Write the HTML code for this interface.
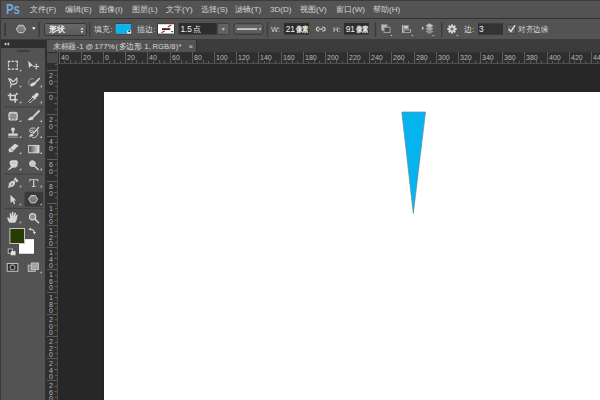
<!DOCTYPE html>
<html><head><meta charset="utf-8">
<style>
*{margin:0;padding:0;box-sizing:border-box}
html,body{width:600px;height:400px;overflow:hidden;background:#272727;font-family:"Liberation Sans",sans-serif;position:relative}
.a{position:absolute}
#menubar{left:0;top:0;width:600px;height:18px;background:#535353;border-top:1px solid #3c3c3c}
#menuline{left:0;top:18px;width:600px;height:1px;background:#333}
#opts{left:0;top:19px;width:600px;height:21px;background:#535353;border-bottom:1px solid #3c3c3c}
.mi{top:5px;font-size:8px;color:#d4d4d4;line-height:10px;white-space:nowrap}
#ps{left:5.5px;top:2px;font-size:14.5px;font-weight:bold;color:#72a9de;line-height:15px;transform:scaleX(0.78);transform-origin:0 0}
#tabbar{left:47px;top:40px;width:553px;height:12px;background:#3b3b3b}
#tab{left:47px;top:40px;width:150px;height:12px;background:#535353;border-right:1px solid #2e2e2e}
#leftcol{left:0;top:40px;width:47px;height:360px;background:#303030}
#lborder{left:0;top:0;width:1.3px;height:400px;background:#3a3a3a}
#panelhead{left:1px;top:40px;width:44.4px;height:8px;background:#2f2f2f}
#panel{left:1px;top:48px;width:44px;height:352px;background:#535353}
#hruler{left:47px;top:52px;width:553px;height:12px;background:#2e2e2e;border-bottom:1px solid #4e4e4e;border-top:1px solid #333}
#vruler{left:47px;top:52px;width:11px;height:348px;background:#2e2e2e;border-right:1px solid #4e4e4e}
#corner{left:47px;top:53px;width:10px;height:10px;background:#4a4a4a}
.ot{font-size:8px;color:#d8d8d8;line-height:10px;white-space:nowrap}
.num{font-size:8.4px;font-weight:normal;letter-spacing:-0.1px;color:#f0f0f0}
.cj{font-size:8px;font-weight:bold;color:#e8e8e8;line-height:10px;transform:scaleX(0.8);transform-origin:0 0}
.rt{font-size:7px;fill:#b8b8b8;font-family:"Liberation Sans",sans-serif}
.tt{font-size:7.5px;color:#d6d6d6;line-height:10px;white-space:nowrap}
#canvas{left:104px;top:92px;width:496px;height:308px;background:#fff;box-shadow:0 0 1px #111}
</style></head><body>
<div id="menubar" class="a"></div>
<div id="menuline" class="a"></div>
<div id="ps" class="a">Ps</div>
<div class="a mi" style="left:30px">文件(F)</div>
<div class="a mi" style="left:65px">编辑(E)</div>
<div class="a mi" style="left:99px">图像(I)</div>
<div class="a mi" style="left:132px">图层(L)</div>
<div class="a mi" style="left:166px">文字(Y)</div>
<div class="a mi" style="left:201px">选择(S)</div>
<div class="a mi" style="left:235px">滤镜(T)</div>
<div class="a mi" style="left:270px">3D(D)</div>
<div class="a mi" style="left:300px">视图(V)</div>
<div class="a mi" style="left:336px">窗口(W)</div>
<div class="a mi" style="left:373px">帮助(H)</div>
<div id="opts" class="a"></div>

<!-- options bar -->
<div class="a" style="left:3.8px;top:23px;width:2.4px;height:13px;background:#4e4e4e;border:0.7px solid #3e3e3e"></div>
<svg class="a" style="left:0;top:19px" width="600" height="21">
 <defs>
  <linearGradient id="hexg" x1="0" y1="0" x2="0" y2="1"><stop offset="0" stop-color="#909090"/><stop offset="1" stop-color="#6c6c6c"/></linearGradient>
  <linearGradient id="ddg" x1="0" y1="0" x2="0" y2="1"><stop offset="0" stop-color="#686868"/><stop offset="1" stop-color="#5a5a5a"/></linearGradient>
 </defs>
 <polygon points="16.3,10 18.8,6.3 23.2,6.3 25.7,10 23.2,13.7 18.8,13.7" fill="url(#hexg)" stroke="#d2d2d2" stroke-width="0.9"/>
 <polygon points="32,8.2 35.6,8.2 33.8,11" fill="#eee"/>
 <rect x="38.6" y="3" width="1.4" height="15" fill="#3c3c3c"/>
 <rect x="44.5" y="4.5" width="42" height="12" rx="2" fill="url(#ddg)" stroke="#363636" stroke-width="1"/>
 <polygon points="80.5,10.8 83.5,10.8 82,8.3" fill="#ddd"/>
 <polygon points="80.5,12 83.5,12 82,14.3" fill="#ddd"/>
 <rect x="89" y="3" width="1.4" height="15" fill="#3c3c3c"/>
 <rect x="114.8" y="4.4" width="17.2" height="11" fill="#3a3a3a"/><rect x="115.6" y="5.2" width="15.6" height="9.4" fill="#9ab8c4"/><rect x="116" y="5.5" width="15" height="8.8" fill="#02b5ef"/>
 <rect x="127.2" y="11.4" width="4" height="3.2" fill="#f0f0f0"/>
 <polygon points="127.8,11.8 130.8,11.8 129.3,13.4" fill="#111"/>
 <rect x="157" y="4.4" width="17.8" height="11" fill="#3a3a3a"/><rect x="158" y="5.2" width="16" height="9.4" fill="#fff"/>
 <rect x="162" y="9.2" width="8.2" height="1.8" fill="#2a2a2a"/>
 <line x1="167.8" y1="8" x2="171.2" y2="6" stroke="#e62020" stroke-width="1.3"/>
 <line x1="161.4" y1="13.8" x2="164.8" y2="11.8" stroke="#e62020" stroke-width="1.3"/>
 <polygon points="170.6,12.2 173.6,12.2 172.1,13.6" fill="#111"/>
 <rect x="178.7" y="4" width="38" height="11.5" fill="#2d2d2d"/>
 <rect x="217.5" y="4.5" width="11.5" height="11" rx="1.5" fill="#626262" stroke="#3a3a3a" stroke-width="0.8"/>
 <polygon points="221.5,9.5 225,9.5 223.25,11.3" fill="#e6e6e6"/>
 <rect x="234" y="4.8" width="29" height="10.4" rx="2" fill="url(#ddg)" stroke="#363636" stroke-width="1"/>
 <rect x="237" y="9.4" width="20" height="1.3" fill="#f2f2f2"/>
 <polygon points="258.5,9.5 261.5,9.5 260,11.2" fill="#e6e6e6"/>
 <rect x="266.8" y="3" width="1.4" height="15" fill="#3c3c3c"/>
 <rect x="284" y="4" width="25" height="11.5" fill="#2d2d2d"/>
 <g fill="none" stroke="#d8d8d8" stroke-width="1.1">
  <path d="M319.2,8.2 h-1.5 a2,2 0 0 0 0,3.8 h1.5"/>
  <path d="M322.3,8.2 h1.5 a2,2 0 0 1 0,3.8 h-1.5"/>
  <line x1="318.5" y1="10.1" x2="323" y2="10.1"/>
 </g>
 <rect x="344" y="4" width="25" height="11.5" fill="#2d2d2d"/>
 <rect x="374.8" y="3" width="1.4" height="15" fill="#3c3c3c"/>
 <rect x="381.3" y="5.6" width="5.8" height="5.8" fill="#b8b8b8" stroke="#8a8a8a" stroke-width="0.6"/>
 <rect x="384" y="8.2" width="6" height="5.2" fill="#4a4a4a" stroke="#a8a8a8" stroke-width="0.9"/>
 <polygon points="390.3,16 392.3,16 391.3,17.2" fill="#ddd"/>
 <rect x="402" y="6" width="1.3" height="8" fill="#bdbdbd"/>
 <rect x="403.8" y="6.6" width="4.5" height="3.2" fill="#c8c8c8" stroke="#9a9a9a" stroke-width="0.5"/>
 <rect x="404" y="11" width="6.5" height="2.2" fill="#2e2e2e" stroke="#cfcfcf" stroke-width="0.8"/>
 <polygon points="411.3,16 413.3,16 412.3,17.2" fill="#ddd"/>
 <g fill="#c9c9c9" stroke="#9a9a9a" stroke-width="0.4">
  <polygon points="429.5,4.5 433.3,6.8 429.5,9 425.7,6.8"/>
  <polygon points="429.5,7.5 433.3,9.7 429.5,12 425.7,9.7" fill="#a9a9a9"/>
  <polygon points="429.5,10.3 433.3,12.5 429.5,14.8 425.7,12.5" fill="#8f8f8f"/>
 </g>
 <polygon points="421.5,9.3 424,9.3 422.75,7.6" fill="#ddd"/>
 <rect x="422.3" y="9.3" width="0.9" height="1.5" fill="#ddd"/>
 <polygon points="432.3,16 434.3,16 433.3,17.2" fill="#ddd"/>
 <rect x="441" y="3" width="1.4" height="15" fill="#3c3c3c"/>
 <g transform="translate(452,10)">
  <circle r="3.6" fill="#d4d4d4"/>
  <g fill="#d4d4d4">
   <rect x="-0.9" y="-4.7" width="1.8" height="9.4"/>
   <rect x="-0.9" y="-4.7" width="1.8" height="9.4" transform="rotate(45)"/>
   <rect x="-0.9" y="-4.7" width="1.8" height="9.4" transform="rotate(90)"/>
   <rect x="-0.9" y="-4.7" width="1.8" height="9.4" transform="rotate(135)"/>
  </g>
  <circle r="1.5" fill="#6a6a6a"/>
 </g>
 <polygon points="456.3,16 458.3,16 457.3,17.2" fill="#ddd"/>
 <rect x="478" y="4.3" width="25" height="11.4" fill="#333"/>
 <rect x="507" y="5.8" width="8.3" height="8.8" rx="1" fill="#656565" stroke="#3c3c3c" stroke-width="0.8"/>
 <path d="M508.6,9.8 L510.9,12.6 L515.2,6.2" fill="none" stroke="#f2f2f2" stroke-width="1.2"/>
</svg>
<div class="a ot" style="left:49px;top:25px;font-size:8px;color:#f4f4f4;font-weight:bold">形状</div>
<div class="a ot" style="left:94px;top:25px">填充</div><div class="a ot" style="left:110.3px;top:25px">:</div>
<div class="a ot" style="left:137px;top:25px">描边</div><div class="a ot" style="left:153.3px;top:25px">:</div>
<div class="a ot num" style="left:180.6px;top:24.4px;font-weight:normal;color:#f2f2f2;font-size:8.3px">1.5</div><div class="a ot" style="left:192.6px;top:25px;color:#e8e8e8">点</div>
<div class="a ot" style="left:271px;top:25px;font-size:7.5px">W:</div>
<div class="a ot num" style="left:285.8px;top:24.2px">21</div><div class="a ot cj" style="left:296.3px;top:24.6px">像素</div>
<div class="a ot" style="left:333px;top:25px;font-size:7.5px">H:</div>
<div class="a ot num" style="left:345.8px;top:24.2px">91</div><div class="a ot cj" style="left:356.3px;top:24.6px">像素</div>
<div class="a ot" style="left:464px;top:25px">边:</div>
<div class="a ot num" style="left:479px;top:24.2px">3</div>
<div class="a ot" style="left:518.2px;top:25px;transform:scaleX(0.94);transform-origin:0 0">对齐边缘</div>
<div id="leftcol" class="a"></div>
<div id="panelhead" class="a"></div>
<div id="panel" class="a"></div>
<svg class="a" style="left:0;top:0" width="47" height="400">
 <defs>
  <linearGradient id="tg1" x1="0" y1="0" x2="0" y2="1"><stop offset="0" stop-color="#909090"/><stop offset="1" stop-color="#6a6a6a"/></linearGradient>
  <linearGradient id="grd" x1="0" y1="0" x2="1" y2="0"><stop offset="0" stop-color="#4a4a4a"/><stop offset="1" stop-color="#e0e0e0"/></linearGradient>
 </defs>
 <polygon points="4,44 6.3,42.3 6.3,45.7" fill="#cfcfcf"/>
 <polygon points="6.8,44 9.1,42.3 9.1,45.7" fill="#cfcfcf"/>
 <rect x="17" y="50" width="12.2" height="1.8" fill="#3c3c3c"/>
 <!-- separators -->
 <rect x="4" y="106.4" width="39" height="1.1" fill="#424242"/>
 <rect x="4" y="173.5" width="39" height="1.1" fill="#424242"/>
 <rect x="4" y="208" width="39" height="1.1" fill="#424242"/>
 <!-- selected shape tool bg -->
 <rect x="24.6" y="191.8" width="18.6" height="15" rx="1.5" fill="#3a3a3a"/>
 <g fill="none" stroke="#d4d4d4" stroke-linecap="round" stroke-linejoin="round">
  <!-- marquee -->
  <path d="M7.9,61.4 H17.9 M7.9,69.2 H17.9" stroke-width="1.2" stroke-dasharray="2.6 1.1" stroke-linecap="butt"/><path d="M8.5,60.9 V69.8 M17.3,60.9 V69.8" stroke-width="1.2" stroke-dasharray="2.5 0.95" stroke-linecap="butt"/>
  <!-- lasso -->
  <path d="M8.7,78.6 Q11.5,79 12.8,81.8 Q15.2,80.5 16.8,78 Q17.5,81.5 16.6,83 Q14.5,84.8 11.5,84.4 Q10.2,82 8.7,78.6 Z M11.2,84.4 L10.6,86.8" stroke-width="1.2"/>
  <!-- quick select dashed arc -->
  <path d="M33,78.8 Q29,78.5 28.6,82 Q28.6,85.6 31.5,86" stroke-width="0.9" stroke-dasharray="1.5 1" stroke="#a8a8a8"/>
  <path d="M39.3,78.6 L34.6,83.4" stroke-width="1.6"/>
  <!-- crop -->
  <path d="M7.8,95.5 H15.2 V102.8 M10.3,93 V99.8 H17.6 M15.2,95.5 L17.6,93" stroke-width="1.5" stroke-linecap="butt"/>
  <!-- eyedropper -->
  
  <!-- brush handle -->
  <path d="M39,111 L33,117.2" stroke-width="1.8"/>
  <!-- history spiral -->
  <path d="M34.8,128.2 Q30.4,127.2 29.5,130.4 Q29.4,132.8 32,132.5 Q33.7,132 33.1,130.6 Q32.4,129.6 31.2,130.4" stroke-width="0.9"/><path d="M37.8,130.4 Q38.9,134.6 36.1,136.8 Q34.7,137.9 32.8,137.7" stroke-width="0.9"/>
  <path d="M38.6,127.6 L33.4,133.2" stroke-width="1.4"/>
  <!-- dodge -->
  <circle cx="32.4" cy="163.6" r="2.9" fill="#c8c8c8" stroke-width="1"/>
  <path d="M34.6,165.9 L38.2,169.5" stroke-width="1.4"/>
  <!-- zoom -->
  <circle cx="32.6" cy="216.7" r="3.1" fill="#8c8c8c" stroke-width="1.2"/>
  <path d="M35,219.1 L38.6,222.7" stroke-width="1.6"/>
  <!-- swap arrows -->
  <path d="M30,229.2 Q33.8,229 34.4,232.6" stroke-width="1.1"/>
 </g>
 <g fill="#d6d6d6">
  <!-- move arrow -->
  <polygon points="28.2,60.8 33.4,65.9 30.8,66 29,68.2"/>
  <g transform="translate(36.3,66.5)">
   <rect x="-2.6" y="-0.45" width="5.2" height="0.9"/><rect x="-0.45" y="-2.6" width="0.9" height="5.2"/>
   <polygon points="-3,0 -1.8,-1.1 -1.8,1.1"/><polygon points="3,0 1.8,-1.1 1.8,1.1"/>
   <polygon points="0,-3 -1.1,-1.8 1.1,-1.8"/><polygon points="0,3 -1.1,1.8 1.1,1.8"/>
  </g>
  <!-- quick select head -->
  <ellipse cx="33" cy="84.3" rx="2.8" ry="1.7" transform="rotate(-25 33 84.3)"/>
  <!-- eyedropper head -->
  <g transform="rotate(-45 34.5 97)"><rect x="27.2" y="95.9" width="6" height="2.2" fill="#535353" stroke="#d4d4d4" stroke-width="0.8"/><rect x="32.8" y="94.7" width="1.8" height="4.6"/><rect x="34.3" y="95.3" width="5.2" height="3.4" rx="1.5"/></g>
  <!-- spot heal -->
  <rect x="8.3" y="111.8" width="9.6" height="8.8" rx="2.6" fill="#d0d0d0"/>
  <!-- brush head -->
  <path d="M27.7,119.9 Q28.6,117.6 31.4,116.4 L33.8,118.4 Q32.6,121 27.7,119.9 Z"/>
  <!-- stamp -->
  <circle cx="13" cy="129.3" r="1.9"/>
  <rect x="12.2" y="130.5" width="1.6" height="3"/>
  <rect x="8.2" y="133.4" width="9.6" height="2.4" rx="0.6"/>
  <rect x="8.2" y="136.6" width="9.6" height="1" fill="#a8a8a8"/>
  <!-- history brush head -->
  <path d="M28.9,136.5 Q29.5,134.5 31.8,133.5 L33.7,135 Q32.7,137.1 28.9,136.5 Z"/>
  <!-- eraser -->
  <polygon points="8.4,149.6 14.8,143.8 18.8,145.6 13,151.6 9.4,152.4"/>
  <!-- smudge -->
  <path d="M9.6,161.8 Q10,160.3 12.2,160.3 L16.4,160.3 Q18,160.5 17.9,162.4 L17.6,165 Q17.2,167.6 14,167.8 L12.8,167.5 L9,170.3 L8.2,169.5 L11,166.4 Q9.2,164.6 9.6,161.8 Z"/>
  <!-- pen -->
  <path d="M8,187.9 L9.2,183.2 Q10.8,180.8 14,180.6 L15.4,182 Q15.2,185.2 12.8,186.6 Z"/>
  <rect x="13.8" y="178.9" width="4.6" height="2.2" transform="rotate(45 16.1 180)"/>
  <!-- type T -->
  <path d="M29.4,179.2 H38.2 V181.6 H37.6 Q37.3,180.1 36.4,180.1 H34.3 V186.2 H35.6 V187 H31.8 V186.2 H33.1 V180.1 H31.2 Q30.3,180.1 30,181.6 H29.4 Z"/>
  <!-- path selection arrow -->
  <polygon points="10.4,194.8 16.2,200.4 13.8,200.6 15.2,203.6 14,204.2 12.6,201.2 10.6,203"/>
  <!-- hand -->
  <path d="M9.4,222.8 Q7.2,220 7.2,217.8 Q7.8,217 8.6,217.6 L10,219 L9.6,213.6 Q10.2,212.8 11,213.6 L11.4,216.6 L11.8,212.2 Q12.6,211.4 13.4,212.2 L13.4,216.4 L14.6,212.8 Q15.4,212.2 16,213 L15.4,216.8 L16.8,214.6 Q17.6,214.4 17.8,215.2 L16.6,220 Q15.8,222.6 14.6,222.8 Z"/>
  <!-- swap arrow heads -->
  <polygon points="28.6,229.2 31,227.6 31,230.8"/>
  <polygon points="34.4,234.4 32.8,232 36,232"/>
 </g>
 <!-- spot heal details -->
 <rect x="10" y="113.4" width="6.2" height="5.6" rx="1.6" fill="#8e8e8e"/>
 <g stroke="#535353" stroke-width="0.8">
  <line x1="8.5" y1="113.6" x2="9.5" y2="114.2"/><line x1="8.5" y1="117.6" x2="9.5" y2="117"/>
  <line x1="11" y1="111" x2="11.4" y2="112.2"/><line x1="15" y1="111" x2="14.6" y2="112.2"/>
  <line x1="11" y1="120.2" x2="11.4" y2="119"/><line x1="15" y1="120.2" x2="14.6" y2="119"/>
  <line x1="17.5" y1="113.6" x2="16.5" y2="114.2"/><line x1="17.5" y1="117.6" x2="16.5" y2="117"/>
 </g>
 <!-- eyedropper stripes -->
 
 <!-- gradient -->
 <rect x="28.6" y="145.4" width="10.4" height="7.4" fill="url(#grd)" stroke="#dcdcdc" stroke-width="0.9"/>
 <!-- eraser line -->
 <path d="M9.6,148.6 L13.6,150.6 L18.4,146" stroke="#7a7a7a" stroke-width="0.8" fill="none"/>
 <!-- smudge detail -->
 <path d="M11.8,163.2 Q13.6,162.4 15.6,163.4" stroke="#9a9a9a" stroke-width="0.7" fill="none"/>
 <!-- pen hole -->
 <circle cx="12" cy="184" r="0.8" fill="#535353"/><path d="M8.6,187.4 L11.6,184.4" stroke="#7a7a7a" stroke-width="0.5"/>
 <!-- shape hexagon -->
 <polygon points="28.6,199.2 30.9,195.5 35.3,195.5 37.6,199.2 35.3,202.9 30.9,202.9" fill="url(#tg1)" stroke="#d6d6d6" stroke-width="0.9"/>
 <!-- corner triangles -->
 <g fill="#bdbdbd">
  <polygon points="21.3,69 21.3,71.3 19,71.3"/>
  <polygon points="21.3,85 21.3,87.3 19,87.3"/>
  <polygon points="42,85 42,87.3 39.7,87.3"/>
  <polygon points="21.3,101 21.3,103.3 19,103.3"/>
  <polygon points="42,101 42,103.3 39.7,103.3"/>
  <polygon points="21.3,119.7 21.3,122 19,122"/>
  <polygon points="42,119.7 42,122 39.7,122"/>
  <polygon points="21.3,135.8 21.3,138 19,138"/>
  <polygon points="42,135.8 42,138 39.7,138"/>
  <polygon points="21.3,151.8 21.3,154 19,154"/>
  <polygon points="42,151.8 42,154 39.7,154"/>
  <polygon points="21.3,168 21.3,170.3 19,170.3"/>
  <polygon points="42,168 42,170.3 39.7,170.3"/>
  <polygon points="21.3,185 21.3,187.3 19,187.3"/>
  <polygon points="42,185 42,187.3 39.7,187.3"/>
  <polygon points="21.2,203 21.2,205.2 19,205.2"/>
  <polygon points="42.1,203 42.1,205.2 39.9,205.2"/>
  <polygon points="21.2,221 21.2,223.2 19,223.2"/>
  <polygon points="42,271 42,273.2 39.8,273.2"/>
 </g>
 <!-- colors -->
 <rect x="18.6" y="238.7" width="15.9" height="15.5" fill="#ffffff" stroke="#3a3a3a" stroke-width="0.8"/>
 <rect x="9.9" y="228.5" width="14.6" height="15" fill="#253c04" stroke="#c4c4c4" stroke-width="1"/>
 <rect x="8.2" y="249" width="4.4" height="4.2" fill="#2b2b2b" stroke="#d0d0d0" stroke-width="0.8"/>
 <rect x="11" y="251.2" width="4.2" height="3.8" fill="#e6e6e6" stroke="#d0d0d0" stroke-width="0.6"/>
 <!-- quick mask -->
 <rect x="7.2" y="263.5" width="10.6" height="7.8" fill="#2e2e2e" stroke="#bcbcbc" stroke-width="1.1"/>
 <circle cx="12.5" cy="267.4" r="2.4" fill="#262626" stroke="#8e8e8e" stroke-width="1.3"/>
 <!-- screen mode -->
 <rect x="28.2" y="265.2" width="7" height="6.2" fill="#7a7a7a" stroke="#c4c4c4" stroke-width="0.9"/>
 <rect x="31.3" y="263" width="7.2" height="6.6" fill="#9a9a9a" stroke="#c8c8c8" stroke-width="0.9"/>
 <path d="M32.2,265.2 H37.6 M32.2,267 H37.6" stroke="#c0c0c0" stroke-width="0.6"/>
</svg>

<div id="tabbar" class="a"></div>
<div id="lborder" class="a"></div>
<div id="tab" class="a"></div>
<div id="hruler" class="a"></div>
<div id="vruler" class="a"></div>
<svg class="a" style="left:0;top:52px" width="600" height="12">
<line x1="59.5" y1="0" x2="59.5" y2="11" stroke="#5c5c5c" stroke-width="1"/>
<text x="61" y="7.9" class="rt">40</text>
<line x1="64.5" y1="9" x2="64.5" y2="11" stroke="#5c5c5c" stroke-width="1"/>
<line x1="70.5" y1="8" x2="70.5" y2="11" stroke="#5c5c5c" stroke-width="1"/>
<line x1="75.5" y1="9" x2="75.5" y2="11" stroke="#5c5c5c" stroke-width="1"/>
<line x1="81.5" y1="0" x2="81.5" y2="11" stroke="#5c5c5c" stroke-width="1"/>
<text x="83" y="7.9" class="rt">20</text>
<line x1="86.5" y1="9" x2="86.5" y2="11" stroke="#5c5c5c" stroke-width="1"/>
<line x1="92.5" y1="8" x2="92.5" y2="11" stroke="#5c5c5c" stroke-width="1"/>
<line x1="98.5" y1="9" x2="98.5" y2="11" stroke="#5c5c5c" stroke-width="1"/>
<line x1="103.5" y1="0" x2="103.5" y2="11" stroke="#5c5c5c" stroke-width="1"/>
<text x="105" y="7.9" class="rt">0</text>
<line x1="109.5" y1="9" x2="109.5" y2="11" stroke="#5c5c5c" stroke-width="1"/>
<line x1="114.5" y1="8" x2="114.5" y2="11" stroke="#5c5c5c" stroke-width="1"/>
<line x1="120.5" y1="9" x2="120.5" y2="11" stroke="#5c5c5c" stroke-width="1"/>
<line x1="125.5" y1="0" x2="125.5" y2="11" stroke="#5c5c5c" stroke-width="1"/>
<text x="127" y="7.9" class="rt">20</text>
<line x1="131.5" y1="9" x2="131.5" y2="11" stroke="#5c5c5c" stroke-width="1"/>
<line x1="136.5" y1="8" x2="136.5" y2="11" stroke="#5c5c5c" stroke-width="1"/>
<line x1="142.5" y1="9" x2="142.5" y2="11" stroke="#5c5c5c" stroke-width="1"/>
<line x1="147.5" y1="0" x2="147.5" y2="11" stroke="#5c5c5c" stroke-width="1"/>
<text x="149" y="7.9" class="rt">40</text>
<line x1="153.5" y1="9" x2="153.5" y2="11" stroke="#5c5c5c" stroke-width="1"/>
<line x1="159.5" y1="8" x2="159.5" y2="11" stroke="#5c5c5c" stroke-width="1"/>
<line x1="164.5" y1="9" x2="164.5" y2="11" stroke="#5c5c5c" stroke-width="1"/>
<line x1="170.5" y1="0" x2="170.5" y2="11" stroke="#5c5c5c" stroke-width="1"/>
<text x="172" y="7.9" class="rt">60</text>
<line x1="175.5" y1="9" x2="175.5" y2="11" stroke="#5c5c5c" stroke-width="1"/>
<line x1="181.5" y1="8" x2="181.5" y2="11" stroke="#5c5c5c" stroke-width="1"/>
<line x1="186.5" y1="9" x2="186.5" y2="11" stroke="#5c5c5c" stroke-width="1"/>
<line x1="192.5" y1="0" x2="192.5" y2="11" stroke="#5c5c5c" stroke-width="1"/>
<text x="194" y="7.9" class="rt">80</text>
<line x1="197.5" y1="9" x2="197.5" y2="11" stroke="#5c5c5c" stroke-width="1"/>
<line x1="203.5" y1="8" x2="203.5" y2="11" stroke="#5c5c5c" stroke-width="1"/>
<line x1="208.5" y1="9" x2="208.5" y2="11" stroke="#5c5c5c" stroke-width="1"/>
<line x1="214.5" y1="0" x2="214.5" y2="11" stroke="#5c5c5c" stroke-width="1"/>
<text x="216" y="7.9" class="rt">100</text>
<line x1="220.5" y1="9" x2="220.5" y2="11" stroke="#5c5c5c" stroke-width="1"/>
<line x1="225.5" y1="8" x2="225.5" y2="11" stroke="#5c5c5c" stroke-width="1"/>
<line x1="231.5" y1="9" x2="231.5" y2="11" stroke="#5c5c5c" stroke-width="1"/>
<line x1="236.5" y1="0" x2="236.5" y2="11" stroke="#5c5c5c" stroke-width="1"/>
<text x="238" y="7.9" class="rt">120</text>
<line x1="242.5" y1="9" x2="242.5" y2="11" stroke="#5c5c5c" stroke-width="1"/>
<line x1="247.5" y1="8" x2="247.5" y2="11" stroke="#5c5c5c" stroke-width="1"/>
<line x1="253.5" y1="9" x2="253.5" y2="11" stroke="#5c5c5c" stroke-width="1"/>
<line x1="258.5" y1="0" x2="258.5" y2="11" stroke="#5c5c5c" stroke-width="1"/>
<text x="260" y="7.9" class="rt">140</text>
<line x1="264.5" y1="9" x2="264.5" y2="11" stroke="#5c5c5c" stroke-width="1"/>
<line x1="269.5" y1="8" x2="269.5" y2="11" stroke="#5c5c5c" stroke-width="1"/>
<line x1="275.5" y1="9" x2="275.5" y2="11" stroke="#5c5c5c" stroke-width="1"/>
<line x1="281.5" y1="0" x2="281.5" y2="11" stroke="#5c5c5c" stroke-width="1"/>
<text x="283" y="7.9" class="rt">160</text>
<line x1="286.5" y1="9" x2="286.5" y2="11" stroke="#5c5c5c" stroke-width="1"/>
<line x1="292.5" y1="8" x2="292.5" y2="11" stroke="#5c5c5c" stroke-width="1"/>
<line x1="297.5" y1="9" x2="297.5" y2="11" stroke="#5c5c5c" stroke-width="1"/>
<line x1="303.5" y1="0" x2="303.5" y2="11" stroke="#5c5c5c" stroke-width="1"/>
<text x="305" y="7.9" class="rt">180</text>
<line x1="308.5" y1="9" x2="308.5" y2="11" stroke="#5c5c5c" stroke-width="1"/>
<line x1="314.5" y1="8" x2="314.5" y2="11" stroke="#5c5c5c" stroke-width="1"/>
<line x1="319.5" y1="9" x2="319.5" y2="11" stroke="#5c5c5c" stroke-width="1"/>
<line x1="325.5" y1="0" x2="325.5" y2="11" stroke="#5c5c5c" stroke-width="1"/>
<text x="327" y="7.9" class="rt">200</text>
<line x1="330.5" y1="9" x2="330.5" y2="11" stroke="#5c5c5c" stroke-width="1"/>
<line x1="336.5" y1="8" x2="336.5" y2="11" stroke="#5c5c5c" stroke-width="1"/>
<line x1="342.5" y1="9" x2="342.5" y2="11" stroke="#5c5c5c" stroke-width="1"/>
<line x1="347.5" y1="0" x2="347.5" y2="11" stroke="#5c5c5c" stroke-width="1"/>
<text x="349" y="7.9" class="rt">220</text>
<line x1="353.5" y1="9" x2="353.5" y2="11" stroke="#5c5c5c" stroke-width="1"/>
<line x1="358.5" y1="8" x2="358.5" y2="11" stroke="#5c5c5c" stroke-width="1"/>
<line x1="364.5" y1="9" x2="364.5" y2="11" stroke="#5c5c5c" stroke-width="1"/>
<line x1="369.5" y1="0" x2="369.5" y2="11" stroke="#5c5c5c" stroke-width="1"/>
<text x="371" y="7.9" class="rt">240</text>
<line x1="375.5" y1="9" x2="375.5" y2="11" stroke="#5c5c5c" stroke-width="1"/>
<line x1="380.5" y1="8" x2="380.5" y2="11" stroke="#5c5c5c" stroke-width="1"/>
<line x1="386.5" y1="9" x2="386.5" y2="11" stroke="#5c5c5c" stroke-width="1"/>
<line x1="391.5" y1="0" x2="391.5" y2="11" stroke="#5c5c5c" stroke-width="1"/>
<text x="393" y="7.9" class="rt">260</text>
<line x1="397.5" y1="9" x2="397.5" y2="11" stroke="#5c5c5c" stroke-width="1"/>
<line x1="403.5" y1="8" x2="403.5" y2="11" stroke="#5c5c5c" stroke-width="1"/>
<line x1="408.5" y1="9" x2="408.5" y2="11" stroke="#5c5c5c" stroke-width="1"/>
<line x1="414.5" y1="0" x2="414.5" y2="11" stroke="#5c5c5c" stroke-width="1"/>
<text x="416" y="7.9" class="rt">280</text>
<line x1="419.5" y1="9" x2="419.5" y2="11" stroke="#5c5c5c" stroke-width="1"/>
<line x1="425.5" y1="8" x2="425.5" y2="11" stroke="#5c5c5c" stroke-width="1"/>
<line x1="430.5" y1="9" x2="430.5" y2="11" stroke="#5c5c5c" stroke-width="1"/>
<line x1="436.5" y1="0" x2="436.5" y2="11" stroke="#5c5c5c" stroke-width="1"/>
<text x="438" y="7.9" class="rt">300</text>
<line x1="441.5" y1="9" x2="441.5" y2="11" stroke="#5c5c5c" stroke-width="1"/>
<line x1="447.5" y1="8" x2="447.5" y2="11" stroke="#5c5c5c" stroke-width="1"/>
<line x1="452.5" y1="9" x2="452.5" y2="11" stroke="#5c5c5c" stroke-width="1"/>
<line x1="458.5" y1="0" x2="458.5" y2="11" stroke="#5c5c5c" stroke-width="1"/>
<text x="460" y="7.9" class="rt">320</text>
<line x1="463.5" y1="9" x2="463.5" y2="11" stroke="#5c5c5c" stroke-width="1"/>
<line x1="469.5" y1="8" x2="469.5" y2="11" stroke="#5c5c5c" stroke-width="1"/>
<line x1="475.5" y1="9" x2="475.5" y2="11" stroke="#5c5c5c" stroke-width="1"/>
<line x1="480.5" y1="0" x2="480.5" y2="11" stroke="#5c5c5c" stroke-width="1"/>
<text x="482" y="7.9" class="rt">340</text>
<line x1="486.5" y1="9" x2="486.5" y2="11" stroke="#5c5c5c" stroke-width="1"/>
<line x1="491.5" y1="8" x2="491.5" y2="11" stroke="#5c5c5c" stroke-width="1"/>
<line x1="497.5" y1="9" x2="497.5" y2="11" stroke="#5c5c5c" stroke-width="1"/>
<line x1="502.5" y1="0" x2="502.5" y2="11" stroke="#5c5c5c" stroke-width="1"/>
<text x="504" y="7.9" class="rt">360</text>
<line x1="508.5" y1="9" x2="508.5" y2="11" stroke="#5c5c5c" stroke-width="1"/>
<line x1="513.5" y1="8" x2="513.5" y2="11" stroke="#5c5c5c" stroke-width="1"/>
<line x1="519.5" y1="9" x2="519.5" y2="11" stroke="#5c5c5c" stroke-width="1"/>
<line x1="524.5" y1="0" x2="524.5" y2="11" stroke="#5c5c5c" stroke-width="1"/>
<text x="526" y="7.9" class="rt">380</text>
<line x1="530.5" y1="9" x2="530.5" y2="11" stroke="#5c5c5c" stroke-width="1"/>
<line x1="536.5" y1="8" x2="536.5" y2="11" stroke="#5c5c5c" stroke-width="1"/>
<line x1="541.5" y1="9" x2="541.5" y2="11" stroke="#5c5c5c" stroke-width="1"/>
<line x1="547.5" y1="0" x2="547.5" y2="11" stroke="#5c5c5c" stroke-width="1"/>
<text x="549" y="7.9" class="rt">400</text>
<line x1="552.5" y1="9" x2="552.5" y2="11" stroke="#5c5c5c" stroke-width="1"/>
<line x1="558.5" y1="8" x2="558.5" y2="11" stroke="#5c5c5c" stroke-width="1"/>
<line x1="563.5" y1="9" x2="563.5" y2="11" stroke="#5c5c5c" stroke-width="1"/>
<line x1="569.5" y1="0" x2="569.5" y2="11" stroke="#5c5c5c" stroke-width="1"/>
<text x="571" y="7.9" class="rt">420</text>
<line x1="574.5" y1="9" x2="574.5" y2="11" stroke="#5c5c5c" stroke-width="1"/>
<line x1="580.5" y1="8" x2="580.5" y2="11" stroke="#5c5c5c" stroke-width="1"/>
<line x1="585.5" y1="9" x2="585.5" y2="11" stroke="#5c5c5c" stroke-width="1"/>
<line x1="591.5" y1="0" x2="591.5" y2="11" stroke="#5c5c5c" stroke-width="1"/>
<text x="593" y="7.9" class="rt">440</text>
<line x1="597.5" y1="9" x2="597.5" y2="11" stroke="#5c5c5c" stroke-width="1"/>
</svg>
<svg class="a" style="left:47px;top:0" width="11" height="400">
<line x1="8" y1="64.5" x2="10" y2="64.5" stroke="#5c5c5c" stroke-width="1"/>
<line x1="0" y1="70.5" x2="10" y2="70.5" stroke="#5c5c5c" stroke-width="1"/>
<text x="2" y="78.0" class="rt">2</text>
<text x="2" y="84.6" class="rt">0</text>
<line x1="8" y1="75.5" x2="10" y2="75.5" stroke="#5c5c5c" stroke-width="1"/>
<line x1="7" y1="81.5" x2="10" y2="81.5" stroke="#5c5c5c" stroke-width="1"/>
<line x1="8" y1="86.5" x2="10" y2="86.5" stroke="#5c5c5c" stroke-width="1"/>
<line x1="0" y1="92.5" x2="10" y2="92.5" stroke="#5c5c5c" stroke-width="1"/>
<text x="2" y="100.0" class="rt">0</text>
<line x1="8" y1="98.5" x2="10" y2="98.5" stroke="#5c5c5c" stroke-width="1"/>
<line x1="7" y1="103.5" x2="10" y2="103.5" stroke="#5c5c5c" stroke-width="1"/>
<line x1="8" y1="109.5" x2="10" y2="109.5" stroke="#5c5c5c" stroke-width="1"/>
<line x1="0" y1="114.5" x2="10" y2="114.5" stroke="#5c5c5c" stroke-width="1"/>
<text x="2" y="122.0" class="rt">2</text>
<text x="2" y="128.6" class="rt">0</text>
<line x1="8" y1="120.5" x2="10" y2="120.5" stroke="#5c5c5c" stroke-width="1"/>
<line x1="7" y1="125.5" x2="10" y2="125.5" stroke="#5c5c5c" stroke-width="1"/>
<line x1="8" y1="131.5" x2="10" y2="131.5" stroke="#5c5c5c" stroke-width="1"/>
<line x1="0" y1="136.5" x2="10" y2="136.5" stroke="#5c5c5c" stroke-width="1"/>
<text x="2" y="144.0" class="rt">4</text>
<text x="2" y="150.6" class="rt">0</text>
<line x1="8" y1="142.5" x2="10" y2="142.5" stroke="#5c5c5c" stroke-width="1"/>
<line x1="7" y1="147.5" x2="10" y2="147.5" stroke="#5c5c5c" stroke-width="1"/>
<line x1="8" y1="153.5" x2="10" y2="153.5" stroke="#5c5c5c" stroke-width="1"/>
<line x1="0" y1="159.5" x2="10" y2="159.5" stroke="#5c5c5c" stroke-width="1"/>
<text x="2" y="167.0" class="rt">6</text>
<text x="2" y="173.6" class="rt">0</text>
<line x1="8" y1="164.5" x2="10" y2="164.5" stroke="#5c5c5c" stroke-width="1"/>
<line x1="7" y1="170.5" x2="10" y2="170.5" stroke="#5c5c5c" stroke-width="1"/>
<line x1="8" y1="175.5" x2="10" y2="175.5" stroke="#5c5c5c" stroke-width="1"/>
<line x1="0" y1="181.5" x2="10" y2="181.5" stroke="#5c5c5c" stroke-width="1"/>
<text x="2" y="189.0" class="rt">8</text>
<text x="2" y="195.6" class="rt">0</text>
<line x1="8" y1="186.5" x2="10" y2="186.5" stroke="#5c5c5c" stroke-width="1"/>
<line x1="7" y1="192.5" x2="10" y2="192.5" stroke="#5c5c5c" stroke-width="1"/>
<line x1="8" y1="197.5" x2="10" y2="197.5" stroke="#5c5c5c" stroke-width="1"/>
<line x1="0" y1="203.5" x2="10" y2="203.5" stroke="#5c5c5c" stroke-width="1"/>
<text x="2" y="211.0" class="rt">1</text>
<text x="2" y="217.6" class="rt">0</text>
<text x="2" y="224.2" class="rt">0</text>
<line x1="8" y1="208.5" x2="10" y2="208.5" stroke="#5c5c5c" stroke-width="1"/>
<line x1="7" y1="214.5" x2="10" y2="214.5" stroke="#5c5c5c" stroke-width="1"/>
<line x1="8" y1="220.5" x2="10" y2="220.5" stroke="#5c5c5c" stroke-width="1"/>
<line x1="0" y1="225.5" x2="10" y2="225.5" stroke="#5c5c5c" stroke-width="1"/>
<text x="2" y="233.0" class="rt">1</text>
<text x="2" y="239.6" class="rt">2</text>
<text x="2" y="246.2" class="rt">0</text>
<line x1="8" y1="231.5" x2="10" y2="231.5" stroke="#5c5c5c" stroke-width="1"/>
<line x1="7" y1="236.5" x2="10" y2="236.5" stroke="#5c5c5c" stroke-width="1"/>
<line x1="8" y1="242.5" x2="10" y2="242.5" stroke="#5c5c5c" stroke-width="1"/>
<line x1="0" y1="247.5" x2="10" y2="247.5" stroke="#5c5c5c" stroke-width="1"/>
<text x="2" y="255.0" class="rt">1</text>
<text x="2" y="261.6" class="rt">4</text>
<text x="2" y="268.2" class="rt">0</text>
<line x1="8" y1="253.5" x2="10" y2="253.5" stroke="#5c5c5c" stroke-width="1"/>
<line x1="7" y1="258.5" x2="10" y2="258.5" stroke="#5c5c5c" stroke-width="1"/>
<line x1="8" y1="264.5" x2="10" y2="264.5" stroke="#5c5c5c" stroke-width="1"/>
<line x1="0" y1="269.5" x2="10" y2="269.5" stroke="#5c5c5c" stroke-width="1"/>
<text x="2" y="277.0" class="rt">1</text>
<text x="2" y="283.6" class="rt">6</text>
<text x="2" y="290.2" class="rt">0</text>
<line x1="8" y1="275.5" x2="10" y2="275.5" stroke="#5c5c5c" stroke-width="1"/>
<line x1="7" y1="281.5" x2="10" y2="281.5" stroke="#5c5c5c" stroke-width="1"/>
<line x1="8" y1="286.5" x2="10" y2="286.5" stroke="#5c5c5c" stroke-width="1"/>
<line x1="0" y1="292.5" x2="10" y2="292.5" stroke="#5c5c5c" stroke-width="1"/>
<text x="2" y="300.0" class="rt">1</text>
<text x="2" y="306.6" class="rt">8</text>
<text x="2" y="313.2" class="rt">0</text>
<line x1="8" y1="297.5" x2="10" y2="297.5" stroke="#5c5c5c" stroke-width="1"/>
<line x1="7" y1="303.5" x2="10" y2="303.5" stroke="#5c5c5c" stroke-width="1"/>
<line x1="8" y1="308.5" x2="10" y2="308.5" stroke="#5c5c5c" stroke-width="1"/>
<line x1="0" y1="314.5" x2="10" y2="314.5" stroke="#5c5c5c" stroke-width="1"/>
<text x="2" y="322.0" class="rt">2</text>
<text x="2" y="328.6" class="rt">0</text>
<text x="2" y="335.2" class="rt">0</text>
<line x1="8" y1="319.5" x2="10" y2="319.5" stroke="#5c5c5c" stroke-width="1"/>
<line x1="7" y1="325.5" x2="10" y2="325.5" stroke="#5c5c5c" stroke-width="1"/>
<line x1="8" y1="330.5" x2="10" y2="330.5" stroke="#5c5c5c" stroke-width="1"/>
<line x1="0" y1="336.5" x2="10" y2="336.5" stroke="#5c5c5c" stroke-width="1"/>
<text x="2" y="344.0" class="rt">2</text>
<text x="2" y="350.6" class="rt">2</text>
<text x="2" y="357.2" class="rt">0</text>
<line x1="8" y1="342.5" x2="10" y2="342.5" stroke="#5c5c5c" stroke-width="1"/>
<line x1="7" y1="347.5" x2="10" y2="347.5" stroke="#5c5c5c" stroke-width="1"/>
<line x1="8" y1="353.5" x2="10" y2="353.5" stroke="#5c5c5c" stroke-width="1"/>
<line x1="0" y1="358.5" x2="10" y2="358.5" stroke="#5c5c5c" stroke-width="1"/>
<text x="2" y="366.0" class="rt">2</text>
<text x="2" y="372.6" class="rt">4</text>
<text x="2" y="379.2" class="rt">0</text>
<line x1="8" y1="364.5" x2="10" y2="364.5" stroke="#5c5c5c" stroke-width="1"/>
<line x1="7" y1="369.5" x2="10" y2="369.5" stroke="#5c5c5c" stroke-width="1"/>
<line x1="8" y1="375.5" x2="10" y2="375.5" stroke="#5c5c5c" stroke-width="1"/>
<line x1="0" y1="380.5" x2="10" y2="380.5" stroke="#5c5c5c" stroke-width="1"/>
<text x="2" y="388.0" class="rt">2</text>
<text x="2" y="394.6" class="rt">6</text>
<text x="2" y="401.2" class="rt">0</text>
<line x1="8" y1="386.5" x2="10" y2="386.5" stroke="#5c5c5c" stroke-width="1"/>
<line x1="7" y1="391.5" x2="10" y2="391.5" stroke="#5c5c5c" stroke-width="1"/>
<line x1="8" y1="397.5" x2="10" y2="397.5" stroke="#5c5c5c" stroke-width="1"/>
</svg>
<div id="corner" class="a"></div>
<div class="a tt" style="left:53.0px;top:42px;letter-spacing:-0.3px">未标题</div><div class="a tt" style="left:76.6px;top:42px">-</div><div class="a tt" style="left:79.2px;top:42px">1</div><div class="a tt" style="left:85.4px;top:42px">@</div><div class="a tt" style="left:94.4px;top:41.6px;font-size:8px">177%</div><div class="a tt" style="left:115.6px;top:42px">(</div><div class="a tt" style="left:118.6px;top:42px;letter-spacing:-0.2px">多边形</div><div class="a tt" style="left:144.2px;top:41.6px;font-size:8px">1,</div><div class="a tt" style="left:152.4px;top:41.8px;font-size:7.6px;letter-spacing:0.1px">RGB/8)</div><div class="a tt" style="left:178.4px;top:42px">*</div>
<div class="a" style="left:188.5px;top:42px;font-size:8px;color:#d0d0d0;line-height:10px">×</div>

<div id="canvas" class="a"></div>
<svg class="a" style="left:0;top:0" width="600" height="400">
<polygon points="401.8,112 425.5,112 413.3,213.5" fill="#05b3ee" stroke="#6d8a96" stroke-width="0.7"/>
</svg>
</body></html>
